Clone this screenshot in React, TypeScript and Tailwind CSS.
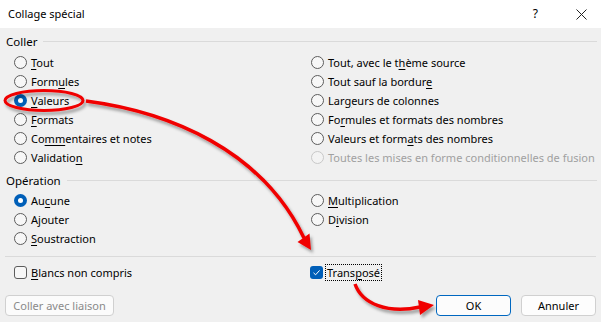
import React from "react";

type Part = string | { u: string };

function Label({ parts, disabled }: { parts: Part[]; disabled?: boolean }) {
  return (
    <span className={disabled ? "whitespace-nowrap text-[#a0a0a0]" : "whitespace-nowrap text-black"}>
      {parts.map((p, i) =>
        typeof p === "string" ? (
          <React.Fragment key={i}>{p}</React.Fragment>
        ) : (
          <span key={i} className="underline underline-offset-[2px] decoration-[1px]">
            {p.u}
          </span>
        )
      )}
    </span>
  );
}

function Radio({ parts, checked, disabled }: { parts: Part[]; checked?: boolean; disabled?: boolean }) {
  return (
    <div className="flex h-[19px] items-center gap-[4px]">
      {checked ? (
        <div className="flex h-[13px] w-[13px] shrink-0 items-center justify-center rounded-full bg-[#005fb8]">
          <div className="h-[5px] w-[5px] rounded-full bg-white" />
        </div>
      ) : (
        <div
          className={
            disabled
              ? "h-[13px] w-[13px] shrink-0 rounded-full border border-[#c8c8c8] bg-[#f3f3f3]"
              : "h-[13px] w-[13px] shrink-0 rounded-full border border-[#5c5c5c] bg-[#f7f7f7]"
          }
        />
      )}
      <Label parts={parts} disabled={disabled} />
    </div>
  );
}

function SectionTitle({ text }: { text: string }) {
  return (
    <div className="flex h-[19px] items-center gap-[6px] pl-[6px] pr-[4px]">
      <span className="text-[11.5px]">{text}</span>
      <div className="h-px flex-1 bg-[#dadada]" />
    </div>
  );
}

export default function App() {
  return (
    <div
      className="relative h-[322px] w-[601px] overflow-hidden bg-[#f0f0f0] text-[11px] leading-[16px] text-black"
      style={{ fontFamily: '"Noto Sans", "Open Sans", sans-serif' }}
    >
      {/* Title bar */}
      <div className="flex h-[28px] items-center bg-white">
        <span className="pl-[8px] text-[11px]">Collage spécial</span>
        <div className="flex-1" />
        <span className="mr-[38px] text-[12px]">?</span>
        <svg width="11" height="11" viewBox="0 0 11 11" className="mr-[14px]">
          <path d="M0.5 0.5 L10.5 10.5 M10.5 0.5 L0.5 10.5" stroke="#222" strokeWidth="1" />
        </svg>
      </div>

      {/* Body */}
      <div className="flex flex-col pt-[4px]">
        <SectionTitle text="Coller" />
        <div className="mt-[2px] flex">
          <div className="flex w-[311px] shrink-0 flex-col pl-[14px]">
            <Radio parts={[{ u: "T" }, "out"]} />
            <Radio parts={["Form", { u: "u" }, "les"]} />
            <Radio parts={[{ u: "V" }, "aleurs"]} checked />
            <Radio parts={[{ u: "F" }, "ormats"]} />
            <Radio parts={["Co", { u: "mm" }, "entaires et notes"]} />
            <Radio parts={["Validatio", { u: "n" }]} />
          </div>
          <div className="flex flex-col">
            <Radio parts={["Tout, avec le t", { u: "h" }, "ème source"]} />
            <Radio parts={["Tout sauf la bordur", { u: "e" }]} />
            <Radio parts={["Lar", { u: "g" }, "eurs de colonnes"]} />
            <Radio parts={["Fo", { u: "r" }, "mules et formats des nombres"]} />
            <Radio parts={["Valeurs et form", { u: "a" }, "ts des nombres"]} />
            <Radio parts={["Toutes les mises en forme conditionnelles de fusion"]} disabled />
          </div>
        </div>

        <div className="mt-[4px]">
          <SectionTitle text="Opération" />
        </div>
        <div className="mt-[1px] flex">
          <div className="flex w-[311px] shrink-0 flex-col pl-[14px]">
            <Radio parts={["Au", { u: "c" }, "une"]} checked />
            <Radio parts={["A", { u: "j" }, "outer"]} />
            <Radio parts={[{ u: "S" }, "oustraction"]} />
          </div>
          <div className="flex flex-col">
            <Radio parts={[{ u: "M" }, "ultiplication"]} />
            <Radio parts={["D", { u: "i" }, "vision"]} />
          </div>
        </div>

        <div className="mx-[5px] mt-[8px] h-px bg-[#dadada]" />

        <div className="mt-[6px] flex h-[19px] items-center">
          <div className="flex w-[310px] shrink-0 items-center gap-[4px] pl-[14px]">
            <div className="h-[13px] w-[13px] rounded-[3px] border border-[#5c5c5c] bg-[#f7f7f7]" />
            <Label parts={[{ u: "B" }, "lancs non compris"]} />
          </div>
          <div className="flex items-center gap-[2px]">
            <div className="flex h-[13px] w-[13px] items-center justify-center rounded-[3px] bg-[#005fb8]">
              <svg width="9" height="9" viewBox="0 0 9 9">
                <path d="M1.5 4.8 L3.6 6.8 L7.6 2.4" stroke="white" strokeWidth="1" fill="none" />
              </svg>
            </div>
            <div className="border border-dotted border-black px-[1px] leading-[15px]">
              <Label parts={["Trans", { u: "p" }, "osé"]} />
            </div>
          </div>
        </div>

        <div className="mt-[13px] flex h-[21px] items-stretch px-[5px]">
          <div className="flex w-[109px] items-center justify-center rounded-[4px] border border-[#d0d0d0] bg-[#fbfbfb] text-[#8a8a8a]">
            Coller avec liaison
          </div>
          <div className="flex-1" />
          <div className="flex w-[75px] items-center justify-center rounded-[4px] border border-[#0067c0] bg-[#fcfcfc]">
            OK
          </div>
          <div className="ml-[10px] flex w-[75px] items-center justify-center rounded-[4px] border border-[#d0d0d0] bg-[#fdfdfd]">
            Annuler
          </div>
        </div>
      </div>

      {/* Red annotations overlay */}
      <svg
        className="pointer-events-none absolute inset-0"
        width="601"
        height="322"
        viewBox="0 0 601 322"
      >
        <defs>
          <filter id="sh" x="-20%" y="-20%" width="140%" height="140%">
            <feDropShadow dx="2" dy="3" stdDeviation="1.6" floodColor="#000" floodOpacity="0.35" />
          </filter>
        </defs>
        <g filter="url(#sh)">
          <ellipse cx="44" cy="100.5" rx="39" ry="10" fill="none" stroke="#f00000" strokeWidth="3" />
          <path d="M86 101 C170 112 262 150 304 238" fill="none" stroke="#f00000" strokeWidth="3.5" />
          <polygon points="311,250 297.5,242 309.5,233.5" fill="#f00000" />
          <path d="M355 284 C362 304 388 314 420 307" fill="none" stroke="#f00000" strokeWidth="3.5" />
          <polygon points="434,305 418,300 420,315" fill="#f00000" />
        </g>
      </svg>
    </div>
  );
}
